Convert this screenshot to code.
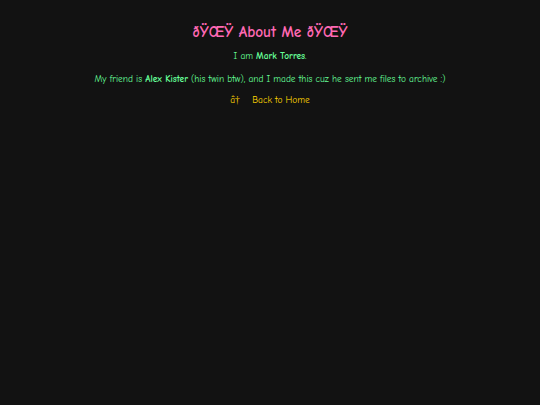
export default function App() {
  return (
    <div className="min-h-[405px] w-full bg-[#121212] text-center pt-[21px]" style={{ fontFamily: '"Comic Sans MS", "Comic Neue", cursive' }}>
      <h1 className="text-[15.3px] font-bold text-[#ff69b4] leading-[22px]">ðŸŒŸ About Me ðŸŒŸ</h1>
      <p className="mt-[6px] text-[9.4px] leading-[14px] text-[#66ff99]">I am <b>Mark Torres</b>.</p>
      <p className="mt-[9px] text-[9.4px] leading-[14px] text-[#66ff99]">My friend is <b>Alex Kister</b> (his twin btw), and I made this cuz he sent me files to archive :)</p>
      <p className="mt-[7px] text-[9.4px] leading-[14px] text-[#ffd700]">â†&nbsp;&nbsp;&nbsp; Back to Home</p>
    </div>
  );
}
